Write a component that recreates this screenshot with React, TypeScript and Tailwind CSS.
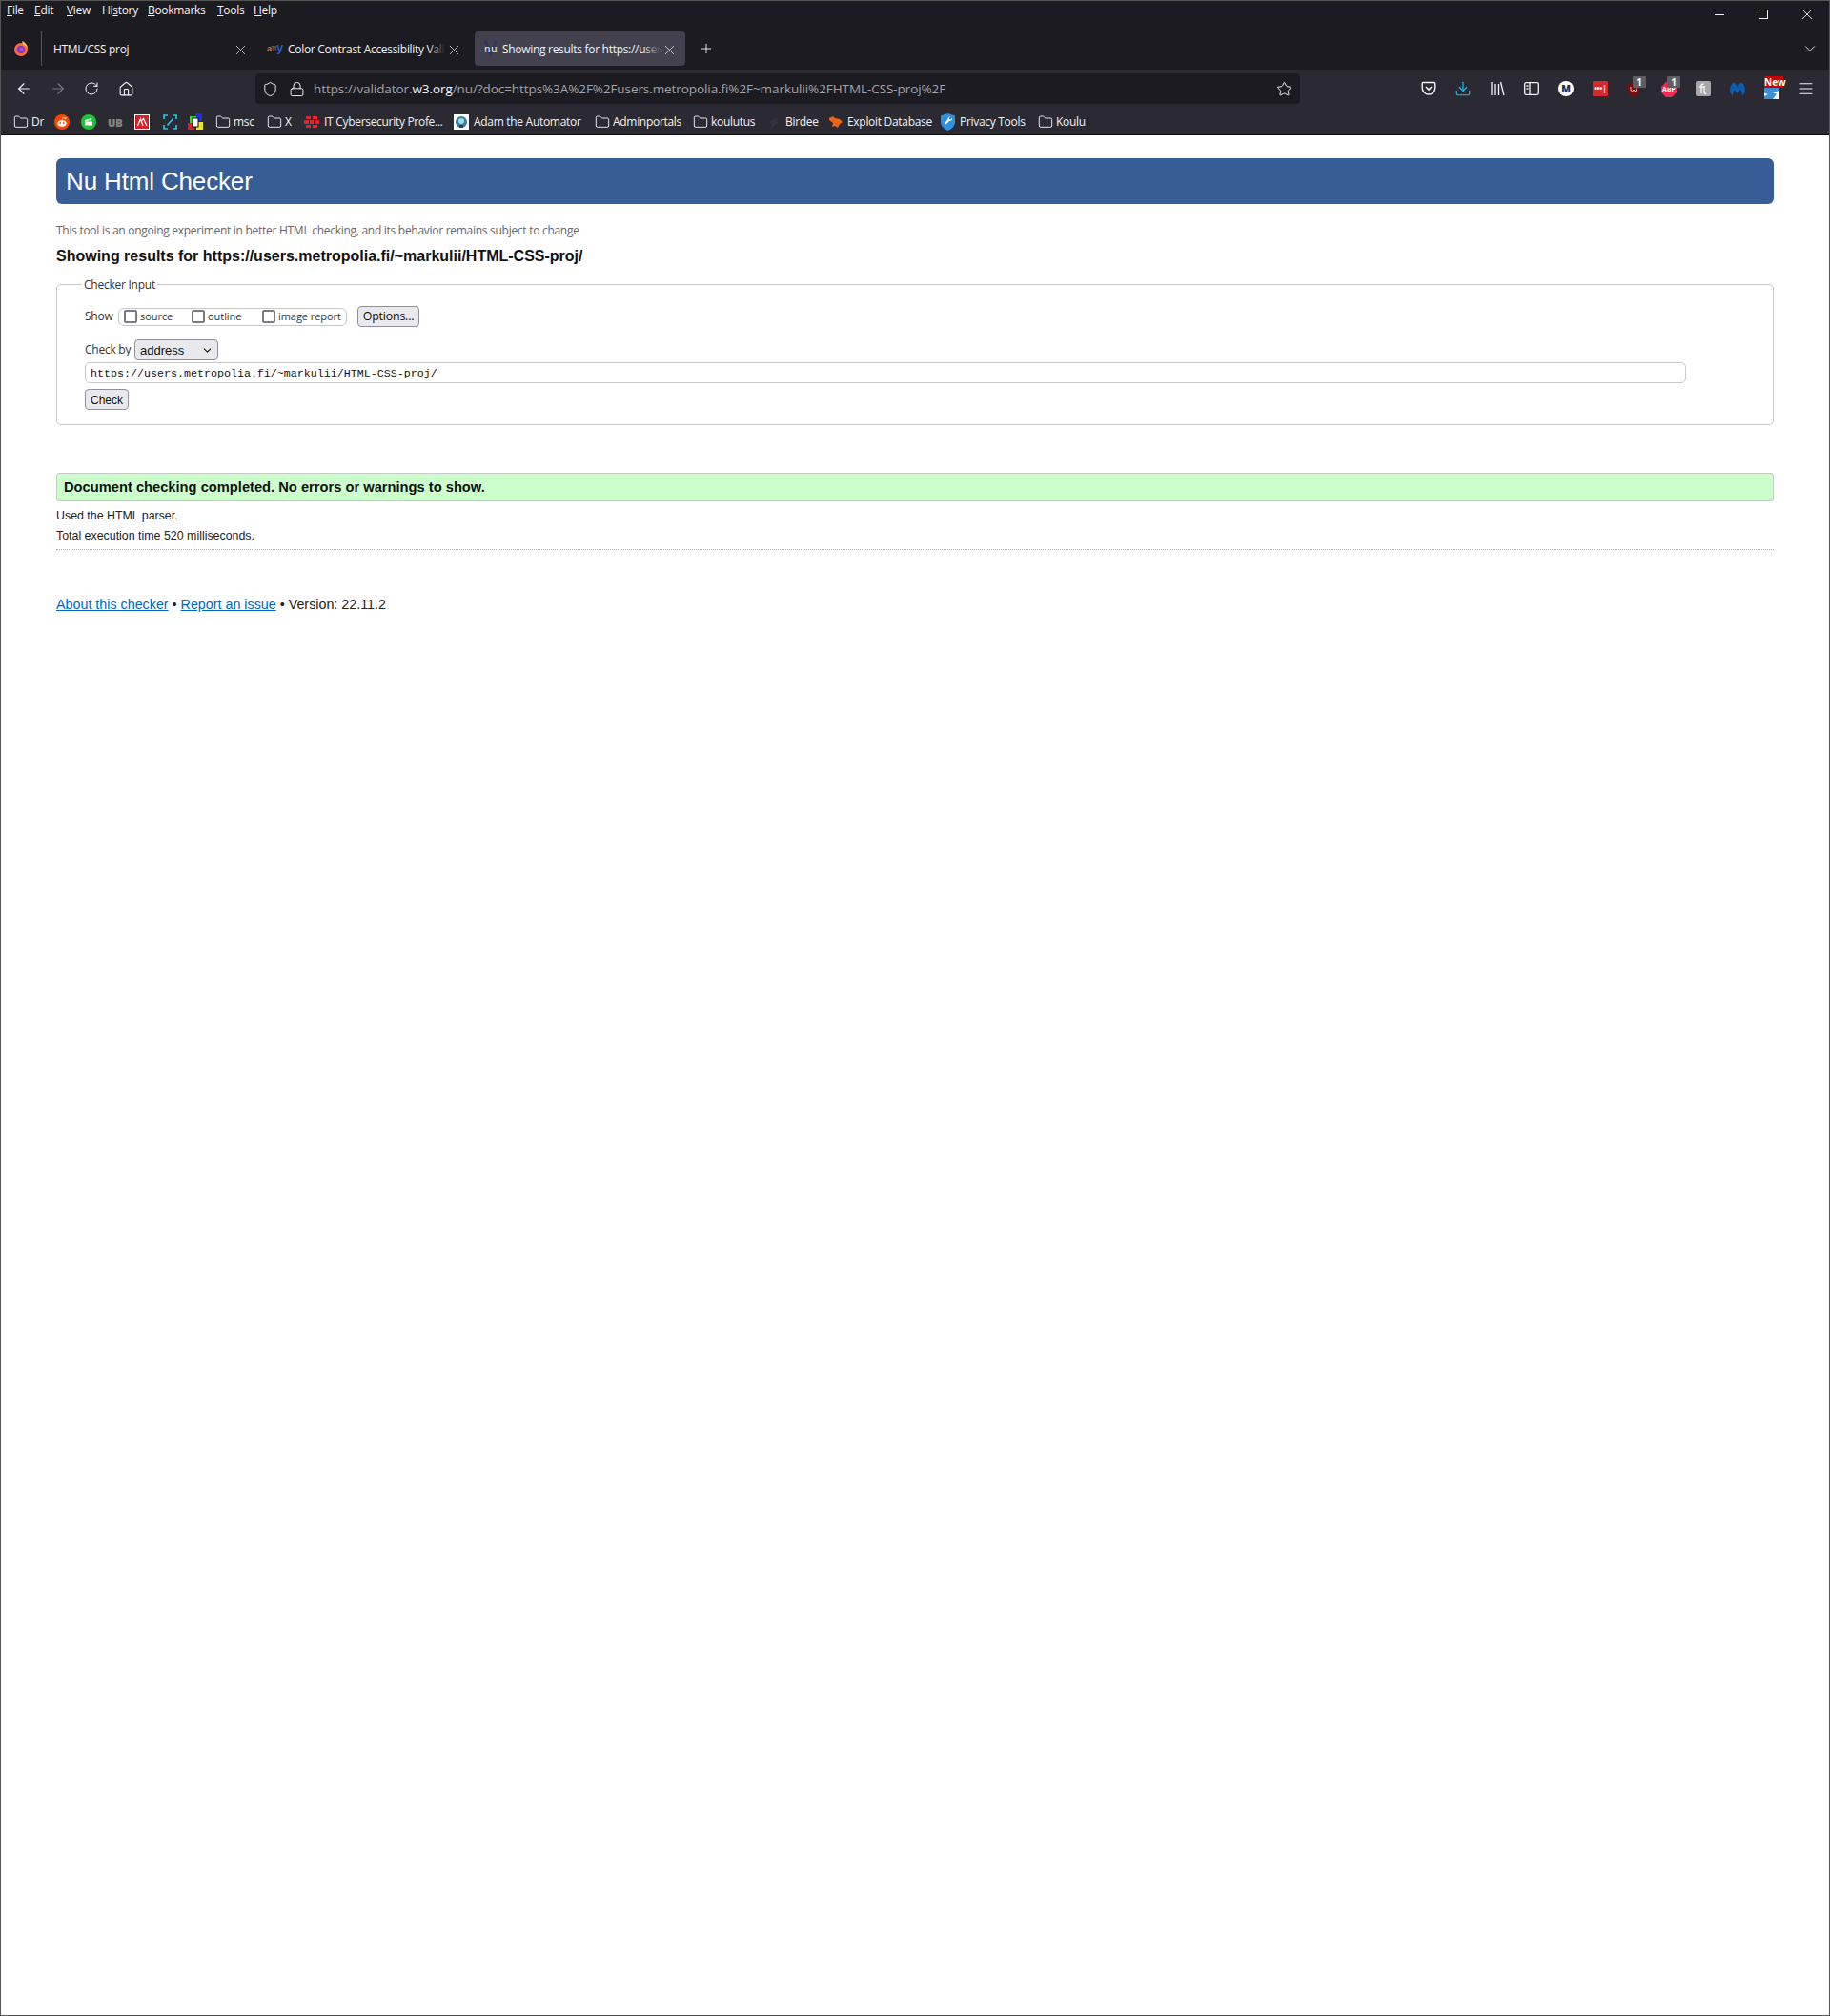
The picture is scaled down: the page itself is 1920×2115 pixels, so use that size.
import React from 'react';
import { ArrowLeft, ArrowRight, RotateCw, House, Shield, Lock, Star, X, Plus, ChevronDown, Menu, Folder, Download } from 'lucide-react';

const chromeFont = "font-['Open_Sans',sans-serif]";

const FolderIcon = () => <Folder size={16} strokeWidth={1.4} className="text-[#f4f4f6] shrink-0" />;

const FolderMark: React.FC<{ label?: string; className?: string }> = ({ label, className }) => (
  <div className={`flex items-center gap-[3px] shrink-0 ${className ?? ''}`}>
    <FolderIcon />
    {label && <span>{label}</span>}
  </div>
);

const Bookmarks = () => (
  <div className="h-[31px] pt-[5px] bg-[#2b2a33] flex items-center pl-[13px] text-[12px] text-[#f2f2f4] tracking-[-0.3px] whitespace-nowrap">
    <FolderMark label="Dr" className="w-[43px]" />
    {/* reddit */}
    <svg width="16" height="16" viewBox="0 0 16 16" className="mr-[12px] shrink-0">
      <circle cx="8" cy="8" r="8" fill="#ff4500" />
      <ellipse cx="8" cy="9.500" rx="4.600" ry="3.200" fill="#fff" />
      <circle cx="6.200" cy="9" r="0.900" fill="#ff4500" />
      <circle cx="9.800" cy="9" r="0.900" fill="#ff4500" />
      <circle cx="11.500" cy="4" r="1" fill="#fff" />
      <path d="M8 6.500 9 3.500l2.500.5" fill="none" stroke="#fff" strokeWidth="0.700" />
    </svg>
    {/* green film */}
    <svg width="16" height="16" viewBox="0 0 16 16" className="mr-[12px] shrink-0">
      <circle cx="8" cy="8" r="8" fill="#1ec337" />
      <path d="M4 7.500h8v4H4zM4 6l7-2 .4 1.500-7 2z" fill="#fff" />
    </svg>
    <span className="w-[16px] mr-[12px] text-[11px] leading-none font-extrabold tracking-[0px] text-[#8a8782] shrink-0">UB</span>
    <svg width="16" height="16" viewBox="0 0 16 16" className="mr-[14px] shrink-0">
      <rect width="16" height="16" fill="#fff" />
      <rect x="1" y="1" width="14" height="14" fill="#d3222a" />
      <path d="M3.500 12 6.500 4.500l2.500 7.500M8 6.500l1.500-2L13 12" fill="none" stroke="#fff" strokeWidth="1.200" />
    </svg>
    <svg width="15" height="16" viewBox="0 0 15 16" className="mr-[11px] shrink-0">
      <path d="M1 5V1h4M10 1h4v4M14 11v4h-4M5 15H1v-4M4.500 11.500l6-7" fill="none" stroke="#1fc5e8" strokeWidth="1.700" />
    </svg>
    <svg width="16" height="18" viewBox="0 0 16 18" className="mr-[13px] shrink-0">
      <rect x="8" y="0" width="7" height="8" fill="#1a2ee0" />
      <rect x="2" y="3" width="7" height="8" fill="#2fe01a" />
      <rect x="0" y="10" width="7" height="7" fill="#e01a2a" />
      <rect x="9" y="9" width="7" height="8" fill="#f2e41a" />
      <rect x="5" y="5" width="6" height="9" fill="#fff" stroke="#111" />
    </svg>
    <FolderMark label="msc" className="w-[54px]" />
    <FolderMark label="X" className="w-[39px]" />
    <svg width="16" height="15" viewBox="0 0 16 15" className="mr-[5px] shrink-0">
      <g fill="#e3262e">
        <rect x="2" y="1" width="5" height="3" /><rect x="9" y="1" width="5" height="3" />
        <rect x="0" y="5" width="5" height="4" /><rect x="6" y="5" width="4" height="4" /><rect x="11" y="5" width="5" height="4" />
        <rect x="2" y="10" width="5" height="3" /><rect x="9" y="10" width="5" height="3" />
      </g>
    </svg>
    <span className="w-[136px] shrink-0">IT Cybersecurity Profe...</span>
    <svg width="16" height="16" viewBox="0 0 16 16" className="mr-[5px] shrink-0">
      <rect width="16" height="16" fill="#fff" />
      <circle cx="8" cy="8" r="6" fill="#3f7f9a" />
      <circle cx="8" cy="7" r="3" fill="#9bdcf0" />
      <rect x="6" y="11" width="4" height="3" fill="#24495a" />
    </svg>
    <span className="w-[127px] shrink-0">Adam the Automator</span>
    <FolderMark label="Adminportals" className="w-[103px]" />
    <FolderMark label="koulutus" className="w-[77px]" />
    <svg width="16" height="18" viewBox="0 0 16 18" className="mr-[4px] shrink-0">
      <path d="M14 1 9 7 8 3 6 8 2 7l4 4-2 6 5-5 5-2-4-1z" fill="#34333b" />
    </svg>
    <span className="w-[45px] shrink-0">Birdee</span>
    <svg width="16" height="14" viewBox="0 0 16 14" className="mr-[4px] shrink-0">
      <path d="M1 3 5 1l2 2 5 1 3 3-3 2-2 4-3-2-3 1 1-4-4-3z" fill="#ef6414" />
    </svg>
    <span className="w-[98px] shrink-0">Exploit Database</span>
    <svg width="15" height="18" viewBox="0 0 15 18" className="mr-[5px] shrink-0">
      <path d="M7.500 0 15 2.500V9c0 4-3.200 7.400-7.500 9C3.200 16.400 0 13 0 9V2.500z" fill="#2f8fe0" />
      <path d="M10.500 3.500a2.500 2.500 0 0 0-3 3L4 10l1.500 1.500 3.500-3.500a2.500 2.500 0 0 0 3-3l-1.500 1.500-1.500-.5-.3-1.500z" fill="#fff" />
    </svg>
    <span className="w-[82px] shrink-0">Privacy Tools</span>
    <FolderMark label="Koulu" />
  </div>
);

const Cell: React.FC<{ children: React.ReactNode }> = ({ children }) => (
  <div className="relative w-[36px] h-[20px] flex items-center justify-center shrink-0">{children}</div>
);

const Count: React.FC<{ className?: string; children: React.ReactNode }> = ({ className, children }) => (
  <span className={`absolute -top-[3px] h-[12px] rounded-[1px] text-[10px] leading-[12px] text-center font-bold text-white ${className ?? ''}`}>{children}</span>
);

const Extensions = () => (
  <div className="flex items-center text-white">
    <Cell>
      <svg width="16" height="16" viewBox="0 0 16 16" fill="none" stroke="#f4f4f6" strokeWidth="1.400">
        <path d="M2.200 1.500h11.600a1 1 0 0 1 1 1V7a6.800 7 0 0 1-13.600 0V2.500a1 1 0 0 1 1-1z" />
        <path d="M5 6l3 3 3-3" strokeWidth="1.600" />
      </svg>
    </Cell>
    <Cell><Download size={18} strokeWidth={1.600} className="text-[#12bef6]" /></Cell>
    <Cell>
      <svg width="16" height="16" viewBox="0 0 16 16" fill="none" stroke="#f4f4f6" strokeWidth="1.300">
        <path d="M2 1v14M6 3v12M9.500 3v12M11.500 1l3.500 14" />
      </svg>
    </Cell>
    <Cell>
      <svg width="16" height="14" viewBox="0 0 16 14" fill="none" stroke="#f4f4f6" strokeWidth="1.300">
        <rect x="0.700" y="0.700" width="14.600" height="12.600" rx="1.500" />
        <path d="M6 1v12M2.500 4h2M2.500 7h2" />
      </svg>
    </Cell>
    <Cell><div className="w-4 h-4 rounded-full bg-white text-[#2b2a33] text-[10px] font-extrabold flex items-center justify-center">M</div></Cell>
    <Cell><div className="w-4 h-4 bg-[#d32a2a] rounded-[1px] text-white text-[8px] leading-none font-bold flex items-center justify-center">•••|</div></Cell>
    <Cell>
      <svg width="12" height="15" viewBox="0 0 12 15" className="-ml-[3px] mt-[3px]">
        <path d="M0 0h12v7c0 3.500-2.500 6.500-6 8-3.500-1.500-6-4.500-6-8z" fill="#7a0c10" />
        <path d="M3 4v3a1.500 1.500 0 0 0 3 0 1.500 1.500 0 0 0 3 0V4" fill="none" stroke="#e8d8d8" strokeWidth="0.900" />
      </svg>
      <Count className="left-[16px] w-[14px] bg-[#5f5e62]">1</Count>
    </Cell>
    <Cell>
      <svg width="16" height="16" viewBox="0 0 16 16" className="mt-[2px]"><polygon points="5,0 11,0 16,5 16,11 11,16 5,16 0,11 0,5" fill="#ef2a53" /></svg>
      <span className="absolute left-[10px] top-[6px] w-4 text-[7px] leading-[10px] text-center font-bold">ABP</span>
      <Count className="left-[16px] w-[14px] bg-[#5f5e62]">1</Count>
    </Cell>
    <Cell>
      <svg width="16" height="16" viewBox="0 0 16 16">
        <rect width="16" height="16" rx="2" fill="#a8a8aa" />
        <path d="M6 13V5c0-1.500 1-2 2.500-2M4 6h6M9 6v6c0 1 .7 1.500 2 1" fill="none" stroke="#f4f4f6" strokeWidth="1.400" />
      </svg>
    </Cell>
    <Cell>
      <svg width="16" height="16" viewBox="0 0 16 16">
        <path d="M0 10C0 6 2 2 4.500 1.500 6 3 7 4.500 8 6c1-1.500 2-3 3.500-4.500C14 2 16 6 16 10c0 2-1 4-3 5.500 0-2.500-.5-5-2-6.500-1 1.500-2 3-3 4-1-1-2-2.500-3-4-1.500 1.500-2 4-2 6.500-2-1.500-3-3.500-3-5.500z" fill="#0d5cb0" />
      </svg>
    </Cell>
    <Cell>
      <svg width="16" height="12" viewBox="0 0 16 12" className="mt-[9px]">
        <rect width="16" height="12" fill="#f4f4f6" />
        <path d="M0 0h16v3L8 5l5 1.500L9 12H0V9l4-2-4-1.500z" fill="#3a8fd8" />
      </svg>
      <Count className="left-[10px] w-[20px] bg-[#cc0000]">New</Count>
    </Cell>
    <Cell><Menu size={18} strokeWidth={1.500} className="text-[#f4f4f6]" /></Cell>
  </div>
);

const menuItems: { key: string; first: string; rest: string; width: string }[] = [
  { key: 'file', first: 'F', rest: 'ile', width: 'w-[29px]' },
  { key: 'edit', first: 'E', rest: 'dit', width: 'w-[34px]' },
  { key: 'view', first: 'V', rest: 'iew', width: 'w-[37px]' },
  { key: 'bookmarks', first: 'B', rest: 'ookmarks', width: 'w-[73px]' },
  { key: 'tools', first: 'T', rest: 'ools', width: 'w-[38px]' },
  { key: 'help', first: 'H', rest: 'elp', width: 'w-[30px]' },
];

const MenuBar = () => (
  <div className="h-[28px] bg-[#1c1b22] flex items-start text-[12px] leading-[16px] text-[#f2f2f4] pl-[6px] tracking-[-0.3px]">
    {menuItems.slice(0, 3).map(m => (
      <span key={m.key} className={`${m.width} pt-[2px] shrink-0`}><u>{m.first}</u>{m.rest}</span>
    ))}
    <span className="w-[48px] pt-[2px] shrink-0">Hi<u>s</u>tory</span>
    {menuItems.slice(3).map(m => (
      <span key={m.key} className={`${m.width} pt-[2px] shrink-0`}><u>{m.first}</u>{m.rest}</span>
    ))}
    <div className="ml-auto h-[28px] flex items-center text-[#f4f4f6]">
      <div className="w-[46px] flex justify-center"><div className="w-[10px] h-px bg-[#f4f4f6]" /></div>
      <div className="w-[46px] flex justify-center"><div className="w-[10px] h-[10px] border border-[#f4f4f6]" /></div>
      <div className="w-[46px] flex justify-center">
        <svg width="10" height="10" viewBox="0 0 10 10" stroke="#f4f4f6" strokeWidth="0.900"><path d="M0 0l10 10M10 0 0 10" /></svg>
      </div>
    </div>
  </div>
);

const TabTitle: React.FC<{ width: string; fade: string; children: React.ReactNode }> = ({ width, fade, children }) => (
  <span className={`relative ${width} whitespace-nowrap shrink-0`}>
    {children}
    <span className={`absolute right-0 top-0 bottom-0 w-[18px] bg-gradient-to-r from-transparent ${fade}`} />
  </span>
);

const TabStrip = () => (
  <div className="h-[44px] bg-[#1c1b22] flex items-start pt-[4px] text-[12px] text-[#f2f2f4] tracking-[-0.3px]">
    <div className="w-[43px] h-[36px] flex items-center justify-center border-r border-[#55545a] shrink-0">
      <svg width="16" height="16" viewBox="0 0 16 16">
        <circle cx="8" cy="9" r="7" fill="#ff6a3a" />
        <path d="M1.500 11C3 15 7 16 9 16c-3 0-7-2-7.500-5z" fill="#e22850" />
        <circle cx="8" cy="9" r="4.300" fill="#7a3bc4" />
        <circle cx="8.500" cy="8.500" r="2" fill="#c74bc9" />
        <path d="M9 0c3 1 6 4 6 8-1-2-3-4-5-4 0-1-.5-2.500-1-4z" fill="#ffbd4f" />
      </svg>
    </div>
    <div className="w-[228px] h-[36px] pt-[2px] pl-[12px] pr-[11px] flex items-center justify-between shrink-0">
      <span>HTML/CSS proj</span>
      <X size={17} strokeWidth={1} />
    </div>
    <div className="w-[226px] h-[36px] pt-[2px] pl-[8px] flex items-center shrink-0">
      <span className="w-[16px] h-[18px] mr-[6px] shrink-0 flex items-baseline text-[9px] leading-[14px] font-bold tracking-[-1.5px] font-['Liberation_Sans',sans-serif]">
        <span className="text-[#e8732a]">a</span><span className="text-[#5f5c50]">11</span><span className="text-[#2b5fb8] text-[13px]">y</span>
      </span>
      <TabTitle width="w-[165px]" fade="to-[#1c1b22]">Color Contrast Accessibility Vali</TabTitle>
      <X size={17} strokeWidth={1} className="ml-[1px]" />
    </div>
    <div className="w-[221px] h-[36px] pt-[2px] bg-[#42414d] rounded-[4px] pl-[9px] flex items-center shrink-0">
      <span className="relative w-[16px] h-[16px] mr-[4px] shrink-0 flex items-center justify-center text-[11px] leading-none tracking-[0.5px] font-['Liberation_Mono',monospace]">
        <svg width="16" height="18" viewBox="0 0 16 18" className="absolute left-0 -top-[1px]">
          <path d="M1 0l7 18 7-18h-3L8 11 4 0z" fill="#2d3566" />
        </svg>
        <span className="relative">nu</span>
      </span>
      <TabTitle width="w-[166px]" fade="to-[#42414d]">Showing results for https://user</TabTitle>
      <X size={17} strokeWidth={1} className="ml-[1px]" />
    </div>
    <div className="h-[36px] flex items-center ml-[14px]"><Plus size={16} strokeWidth={1.400} /></div>
    <div className="h-[36px] flex items-center ml-auto mr-[11px]"><ChevronDown size={18} strokeWidth={1.200} /></div>
  </div>
);

const NavBar = () => (
  <div className="h-[37px] pt-[3px] bg-[#2b2a33] flex items-center pl-[15px] text-[#f4f4f6]">
    <ArrowLeft size={18} strokeWidth={1.500} className="shrink-0 mr-[18px]" />
    <ArrowRight size={18} strokeWidth={1.500} className="shrink-0 mr-[18px] text-[#77767c]" />
    <RotateCw size={16} strokeWidth={1.500} className="shrink-0 mr-[20px]" />
    <House size={17} strokeWidth={1.500} className="shrink-0 mr-[127px]" />
    <div className="w-[1096px] h-[32px] shrink-0 rounded-[4px] bg-[#1c1b22] flex items-center pl-[7px] pr-[8px] text-[13.500px] text-[#a4a3a8] whitespace-nowrap tracking-[-0.08px]">
      <Shield size={17} strokeWidth={1.400} className="text-[#f4f4f6] mr-[11px] shrink-0" />
      <Lock size={17} strokeWidth={1.400} className="text-[#f4f4f6] mr-[9px] shrink-0" />
      <span>https://validator.<span className="text-[#f4f4f6]">w3.org</span>/nu/?doc=https%3A%2F%2Fusers.metropolia.fi%2F~markulii%2FHTML-CSS-proj%2F</span>
      <Star size={17} strokeWidth={1.400} className="text-[#f4f4f6] ml-auto shrink-0" />
    </div>
    <div className="ml-auto mr-[6px]"><Extensions /></div>
  </div>
);

const BrowserChrome = () => (
  <div className={`${chromeFont} select-none`}>
    <MenuBar />
    <TabStrip />
    <NavBar />
    <Bookmarks />
    <div className="h-px bg-[#0c0c0d]" />
  </div>
);

const Checkbox: React.FC<{ label: string; className: string }> = ({ label, className }) => (
  <label className={`flex items-center gap-[3px] whitespace-nowrap ${className}`}>
    <span className="w-[14px] h-[14px] border-2 border-[#7b7a85] rounded-[2px] bg-white shrink-0" />
    <span>{label}</span>
  </label>
);

const grayButton = "bg-[#e9e9ed] border border-[#8f8f9d] rounded-[4px] text-[#111] leading-none";

const CheckerPage = () => (
  <div className="bg-white h-[1972px] px-[58px] pt-[24px] font-['Liberation_Sans',Arial,sans-serif] text-[#222]">
    <h1 className="h-[48px] bg-[#365d95] rounded-[6px] text-white text-[26px] pl-[10px] flex items-center tracking-[-0.15px]">Nu Html Checker</h1>
    <p className={`${chromeFont} mt-[20px] text-[12px] leading-[16px] text-[#666] tracking-[-0.28px]`}>This tool is an ongoing experiment in better HTML checking, and its behavior remains subject to change</p>
    <h2 className="mt-[9px] text-[16px] leading-[20px] font-bold text-[#111] whitespace-nowrap">Showing results for https://users.metropolia.fi/~markulii/HTML-CSS-proj/</h2>
    <section className={`${chromeFont} relative mt-[19px] h-[148px] border border-[#c8c8c8] rounded-[5px] pl-[29px] pt-[22px] text-[12px] text-[#333] tracking-[-0.25px]`}>
      <span className="absolute -top-[8px] left-[26px] bg-white px-[2px] leading-[16px]">Checker Input</span>
      <div className="flex items-center h-[22px]">
        <span className="w-[35px] shrink-0">Show</span>
        <div className="w-[240px] h-[19px] border border-[#c8c8c8] rounded-[6px] flex items-center pl-[5px] text-[11px] tracking-[-0.05px] shrink-0">
          <Checkbox label="source" className="w-[71px]" />
          <Checkbox label="outline" className="w-[74px]" />
          <Checkbox label="image report" className="" />
        </div>
        <button className={`${grayButton} ml-[11px] w-[65px] h-[22px] text-[12.500px] shrink-0`}>Options...</button>
      </div>
      <div className="flex items-center h-[22px] mt-[13px]">
        <span className="w-[52px] shrink-0">Check by</span>
        <div className={`${grayButton} w-[88px] h-[22px] flex items-center justify-between pl-[5px] pr-[4px] text-[13px] font-['Liberation_Sans',sans-serif] tracking-normal`}>
          <span>address</span>
          <ChevronDown size={13} strokeWidth={2} />
        </div>
      </div>
      <div className="w-[1680px] h-[22px] mt-[2px] pt-[3px] border border-[#c8c8c8] rounded-[5px] flex items-center pl-[5px] font-['Liberation_Mono',monospace] text-[11.670px] text-[#111] tracking-normal">https://users.metropolia.fi/~markulii/HTML-CSS-proj/</div>
      <button className={`${grayButton} block mt-[6px] pt-[1px] w-[46px] h-[22px] text-[12px] font-['Liberation_Sans',sans-serif] tracking-normal`}>Check</button>
    </section>
    <div className="mt-[50px] h-[30px] bg-[#ccffcc] border border-[#c8c8c8] rounded-[3px] pl-[7px] flex items-center text-[14.700px] font-bold text-[#111]">Document checking completed. No errors or warnings to show.</div>
    <p className="mt-[6px] text-[12.400px] leading-[18px]">Used the HTML parser.</p>
    <p className="mt-[3px] text-[12.400px] leading-[18px]">Total execution time 520 milliseconds.</p>
    <div className="mt-[5px] border-t border-dotted border-[#aaa]" />
    <p className="mt-[47px] text-[14.300px] leading-[20px] text-[#222]">
      <a href="#" className="text-[#0066cc] underline">About this checker</a> • <a href="#" className="text-[#0066cc] underline">Report an issue</a> • Version: 22.11.2
    </p>
  </div>
);

export default function App() {
  return (
    <div className="w-[1920px] h-[2115px] overflow-hidden border border-[#555] bg-white">
      <BrowserChrome />
      <CheckerPage />
    </div>
  );
}
